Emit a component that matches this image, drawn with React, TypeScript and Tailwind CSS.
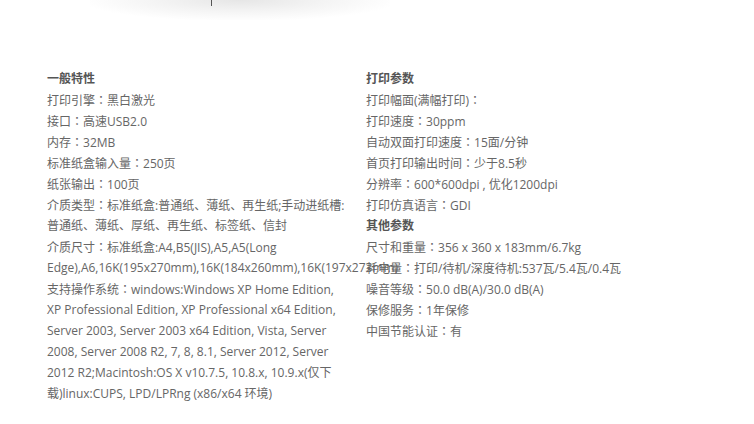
import React from "react";

const left: string[] = [
  "打印引擎：黑白激光",
  "接口：高速USB2.0",
  "内存：32MB",
  "标准纸盒输入量：250页",
  "纸张输出：100页",
  "介质类型：标准纸盒:普通纸、薄纸、再生纸;手动进纸槽:",
  "普通纸、薄纸、厚纸、再生纸、标签纸、信封",
  "介质尺寸：标准纸盒:A4,B5(JIS),A5,A5(Long",
  "Edge),A6,16K(195x270mm),16K(184x260mm),16K(197x273mm)",
  "支持操作系统：windows:Windows XP Home Edition,",
  "XP Professional Edition, XP Professional x64 Edition,",
  "Server 2003, Server 2003 x64 Edition, Vista, Server",
  "2008, Server 2008 R2, 7, 8, 8.1, Server 2012, Server",
  "2012 R2;Macintosh:OS X v10.7.5, 10.8.x, 10.9.x(仅下",
  "载)linux:CUPS, LPD/LPRng (x86/x64 环境)",
];

const right1: string[] = [
  "打印幅面(满幅打印)：",
  "打印速度：30ppm",
  "自动双面打印速度：15面/分钟",
  "首页打印输出时间：少于8.5秒",
  "分辨率：600*600dpi，优化1200dpi",
  "打印仿真语言：GDI",
];

const right2: string[] = [
  "尺寸和重量：356 x 360 x 183mm/6.7kg",
  "耗电量：打印/待机/深度待机:537瓦/5.4瓦/0.4瓦",
  "噪音等级：50.0 dB(A)/30.0 dB(A)",
  "保修服务：1年保修",
  "中国节能认证：有",
];

const font = {
  fontFamily: '"Open Sans", "Noto Sans CJK SC", sans-serif',
};

function Line({ text }: { text: string }) {
  const parts = text.split(/(：|，)/);
  return (
    <div className="whitespace-nowrap h-[21px]">
      {parts.map((p, i) =>
        p === "：" ? (
          <span
            key={i}
            className="font-normal"
            style={{ fontFamily: '"Noto Sans CJK TC", sans-serif' }}
          >
            {p}
          </span>
        ) : p === "，" ? (
          <span key={i} className="px-[3px]">,</span>
        ) : (
          <span key={i}>{p}</span>
        )
      )}
    </div>
  );
}

function Title({ text }: { text: string }) {
  return <div className="h-[21px] font-bold text-[#555]">{text}</div>;
}

export default function App() {
  return (
    <div className="w-[754px] h-[424px] bg-white overflow-hidden" style={font}>
      <div className="h-[20px] flex">
        <div className="ml-[90px] w-[300px] h-[20px] bg-[radial-gradient(ellipse_at_top,#e6e6e6_0%,#f4f4f4_40%,#ffffff_75%)] relative">
          <div className="absolute left-[121px] top-0 w-[1px] h-[6px] bg-[#555]" />
        </div>
      </div>
      <div className="flex mt-[48px] pl-[47px] text-[12px] leading-[21px] text-[#666]">
        <div className="w-[310px] shrink-0">
          <Title text="一般特性" />
          {left.map((t, i) => (
            <Line key={i} text={t} />
          ))}
        </div>
        <div className="ml-[9px] w-[340px] shrink-0">
          <Title text="打印参数" />
          {right1.map((t, i) => (
            <Line key={i} text={t} />
          ))}
          <Title text="其他参数" />
          {right2.map((t, i) => (
            <Line key={i} text={t} />
          ))}
        </div>
      </div>
    </div>
  );
}
